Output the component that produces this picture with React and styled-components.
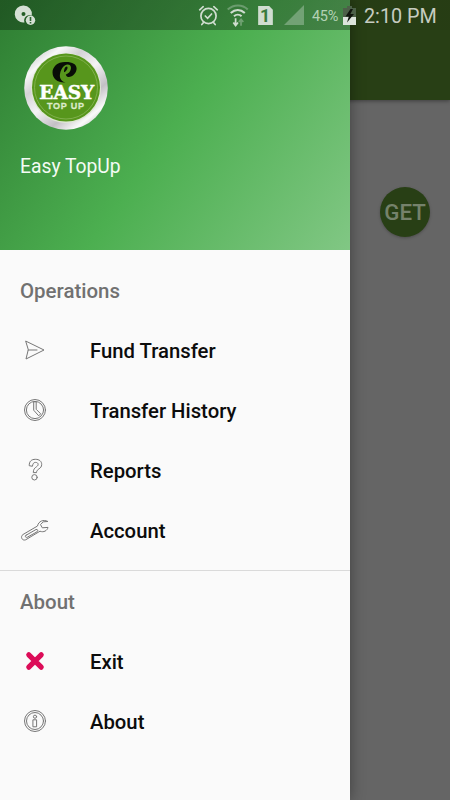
import React from "react";
import styled, { createGlobalStyle } from "styled-components";

const GlobalStyle = createGlobalStyle`
  * { box-sizing: border-box; }
  body { margin: 0; font-family: Roboto, "Liberation Sans", sans-serif; overflow: hidden; }
`;

const Screen = styled.div`
  position: relative;
  width: 450px;
  height: 800px;
  overflow: hidden;
  background: #656565;
`;

const Page = styled.main`
  display: flex;
  flex-direction: column;
  align-items: stretch;
  height: 100%;
`;

const AppBar = styled.div`
  height: 100px;
  background: #283f15;
  box-shadow: 0 1px 4px rgba(0, 0, 0, 0.4);
`;

const PageBody = styled.div`
  display: flex;
  justify-content: flex-end;
  padding: 87px 20px 0;
`;

const GetButton = styled.button`
  display: flex;
  align-items: center;
  justify-content: center;
  width: 50px;
  height: 50px;
  padding: 1px 0 0;
  border: 0;
  border-radius: 50%;
  background: #283f15;
  color: #75826b;
  font: 500 22.3px/1 Roboto, sans-serif;
  box-shadow: 0 1px 3px rgba(0, 0, 0, 0.25);
`;

const Drawer = styled.aside`
  position: absolute;
  top: 0;
  left: 0;
  width: 350px;
  height: 100%;
  background: #fafafa;
  box-shadow: 0 0 14px rgba(0, 0, 0, 0.38);
`;

const DrawerHeader = styled.header`
  height: 250px;
  padding: 45px 20px 0 23px;
  background: linear-gradient(125.54deg, #2e7d32, #4caf50 50%, #81c784);
`;

const AccountName = styled.div`
  margin: 24px 0 0 -3px;
  color: #f4fbf4;
  font-size: 19.3px;
  line-height: 24px;
`;

const Section = styled.section`
  padding-top: ${(p) => p.$top}px;
  & + & {
    margin-top: 9px;
    border-top: 1px solid #dadada;
  }
`;

const SectionTitle = styled.h2`
  display: flex;
  align-items: center;
  height: 60px;
  margin: 0;
  padding-left: 20px;
  color: #717171;
  font-size: 20.45px;
  font-weight: 500;
`;

const MenuItem = styled.div`
  display: grid;
  grid-template-columns: 30px 1fr;
  column-gap: 40px;
  align-items: center;
  height: 60px;
  padding: 0 20px;
  color: #0c0c0c;
  font-size: 20.3px;
  font-weight: 500;
`;

const Icon = styled.svg`
  display: block;
  margin-bottom: 2px;
  fill: none;
  stroke: #777;
  stroke-width: 1;
  stroke-linejoin: round;
  stroke-linecap: round;
`;

const StatusBar = styled.div`
  position: absolute;
  inset: 0 0 auto;
  display: flex;
  align-items: center;
  height: 30px;
  color: #cfd8cf;
  background: linear-gradient(90deg, rgba(0, 0, 0, 0.29) 350px, rgba(0, 0, 0, 0.04) 350px);
`;

const StatusIcon = styled.svg`
  display: block;
  flex: none;
  margin-left: ${(p) => p.$gap}px;
`;

const BatteryText = styled.span`
  width: 31px;
  margin: 2px 0 0 8px;
  font-size: 14.5px;
  letter-spacing: -0.3px;
  white-space: nowrap;
  color: #b3d2b5;
`;

const Clock = styled.span`
  margin: 2px 0 0 8px;
  font-size: 19.8px;
  white-space: nowrap;
  color: #c6ccc1;
`;

const LogoText = styled.text`
  font-family: "DejaVu Serif", serif;
  font-weight: 700;
  fill: #fff;
  text-anchor: middle;
`;

const LogoCaption = styled.text`
  font-family: "Liberation Sans", sans-serif;
  font-weight: 700;
  fill: #dcebc9;
  text-anchor: middle;
`;

const SimText = styled.text`
  font: 700 17px Roboto, sans-serif;
  fill: #397b3d;
  text-anchor: middle;
`;

function Logo() {
  return (
    <svg width="86" height="86" viewBox="0 0 86 86" display="block">
      <defs>
        <linearGradient id="rim" x1="0.1" y1="0" x2="0.9" y2="1">
          <stop offset="0" stopColor="#b9b9b9" />
          <stop offset="0.18" stopColor="#f8f8f8" />
          <stop offset="0.32" stopColor="#d4d2d5" />
          <stop offset="0.5" stopColor="#f4f3f5" />
          <stop offset="0.7" stopColor="#c3c0c5" />
          <stop offset="0.85" stopColor="#fafafa" />
          <stop offset="1" stopColor="#aaa" />
        </linearGradient>
      </defs>
      <circle cx="43" cy="43" r="41.8" fill="url(#rim)" />
      <circle cx="43" cy="43" r="35" fill="#dfe8d4" />
      <circle cx="43" cy="42.5" r="34" fill="#57961c" />
      <circle cx="43" cy="42.5" r="31.5" fill="none" stroke="#8ab659" strokeWidth="0.8" />
      <path d="M43 17C35 16.500 29.500 21.500 29.500 27.300c0 6.500 5 10.500 13 10.200-4.500-1.200-6.500-5-5.300-9.500 1.200-4.700 4-8.200 7.300-8.500 3.500-.2 4.500 3.500 2.500 6.700-1 1.700-2.600 2.800-4.200 3.200.7 2.600 2.900 3.300 5.200 2.200 3.200-1.500 5.600-4.700 5.600-8.200C53.600 19.300 49.500 17 43 17z" fill="#090d07" />
      <path d="M41 27.300c-.2-3 1.200-5.800 2.700-5.800 1.800.2.600 4.300-2.700 5.800z" fill="#090d07" />
      <LogoText x="43.800" y="54.300" fontSize="18" stroke="#fff" strokeWidth="0.5" textLength="55" lengthAdjust="spacingAndGlyphs">EASY</LogoText>
      <LogoCaption x="42.500" y="63.700" fontSize="9" stroke="#dcebc9" strokeWidth="0.3" textLength="37" lengthAdjust="spacing">TOP UP</LogoCaption>
    </svg>
  );
}

const glyphs = {
  send: <path d="M6 6.200 24 15 6 24l2.200-9zM8.200 15H17" />,
  history: (
    <>
      <circle cx="15" cy="15" r="10.500" />
      <circle cx="15" cy="15" r="8.600" />
      <path d="M13.700 7.200v8l5 5.600 2-2-4.500-4.500V7.200z" />
    </>
  ),
  help: (
    <>
      <path d="M9.200 10.300c0-4 2.200-6 6.200-6s6.300 2.100 6.300 5.100c0 4.800-5.200 4.200-5.200 8.200h-3.200c0-6 4.800-5.300 4.800-8.200 0-1.400-1.100-2-2.600-2-2 0-2.600 1.300-3 3.500z" />
      <circle cx="14.500" cy="22.300" r="2.700" />
    </>
  ),
  wrench: (
    <>
      <path d="M27.500 6.300c-4-2.100-9-.2-10 4.700L3 19.500c-3 2-1 6.700 2.700 5.300L20 16.200c3.700 1.500 7.200-.5 8-3.800l-5.700.4-1.800-3.200 2.500-2.500z" />
      <path d="m6 20.300 10-5.800c1.800-.7 2.500 1.400 1 2.300l-9.800 5.500c-1.700.6-2.600-1-1.200-2z" />
    </>
  ),
  close: (
    <path d="m8.800 8.800 12.400 12.400m0-12.400L8.800 21.200" stroke="#dc0c58" strokeWidth="5.200" />
  ),
  info: (
    <>
      <circle cx="15" cy="15" r="10.500" />
      <circle cx="15" cy="15" r="8.500" />
      <circle cx="15" cy="10.700" r="1.600" />
      <path d="M13.300 13.800h3.300v7h-3.300z" />
    </>
  ),
};

const operations = [
  ["send", "Fund Transfer"],
  ["history", "Transfer History"],
  ["help", "Reports"],
  ["wrench", "Account"],
];

const about = [
  ["close", "Exit"],
  ["info", "About"],
];

function Menu({ title, items, top }) {
  return (
    <Section $top={top}>
      <SectionTitle>{title}</SectionTitle>
      {items.map(([icon, label]) => (
        <MenuItem key={label}>
          <Icon width="30" height="30" viewBox="0 0 30 30">{glyphs[icon]}</Icon>
          <span>{label}</span>
        </MenuItem>
      ))}
    </Section>
  );
}

function Status() {
  return (
    <StatusBar>
      <StatusIcon $gap={14} width="22" height="22" viewBox="0 0 22 22">
        <path fillRule="evenodd" fill="#d5e0d5" d="M9.500 1.500a8.500 8.500 0 1 0 1 16.900 5.500 5.500 0 0 1 7.300-6.900A8.500 8.500 0 0 0 9.500 1.500zm0 6.500a2 2 0 1 1 0 4 2 2 0 0 1 0-4z" />
        <circle cx="16.500" cy="16.200" r="4.700" fill="#d5e0d5" />
        <path d="M16.500 13v4m0 1v1.400" stroke="#2d6530" strokeWidth="1.600" />
      </StatusIcon>
      <StatusIcon $gap={162} width="22" height="22" viewBox="0 0 22 22" fill="none" stroke="#d0ddd0" strokeWidth="1.700" strokeLinecap="round">
        <circle cx="10.500" cy="12" r="7.600" />
        <path d="m7.300 12 2.300 2.300 4-4.300M1.700 5.800 5.200 2.700M19.300 5.800 15.800 2.700M5.500 18.500l-1.700 2M15.500 18.500l1.700 2" />
      </StatusIcon>
      <StatusIcon $gap={6} width="24" height="26" viewBox="0 0 22 24" fill="none" stroke="#d0ddd0" strokeWidth="1.900">
        <path d="M1.500 7C7 2 15 2 20 7" stroke="#6b9c6e" />
        <path d="M4.300 10.200c4-3.600 9-3.600 13 0M7.300 13.200c2-1.900 5-1.900 7 0" />
        <path d="M8.800 15v6M6.700 19l2.100 2.800 2.200-2.800" strokeWidth="1.600" />
        <path d="M13.800 22v-5.500M11.700 18.500l2.100-2.500 2.100 2.500" stroke="#70a172" strokeWidth="1.600" />
      </StatusIcon>
      <StatusIcon $gap={7} width="17" height="21" viewBox="0 0 16 20">
        <path d="M1 1h10.500L15 4.500V19H1z" fill="#d0ddd0" />
        <SimText x="7.700" y="16">1</SimText>
      </StatusIcon>
      <StatusIcon $gap={10} width="20" height="20" viewBox="0 0 20 20">
        <path d="M20 0v20H0z" fill="#72a275" />
      </StatusIcon>
      <BatteryText>45%</BatteryText>
      <StatusIcon $gap={0} width="13" height="21" viewBox="0 0 13 21">
        <path d="M4 1h5v2h4v9H0V3h4z" fill="#4c6048" />
        <path d="M0 12h13v8H0z" fill="#dce4dc" />
        <path d="m7.500 4-5 7.500h3.300L4 17.500l7-8.500H7.400L10 4z" fill="#10150d" />
      </StatusIcon>
      <Clock>2:10 PM</Clock>
    </StatusBar>
  );
}

export default function App() {
  return (
    <>
      <GlobalStyle />
      <Screen>
        <Page>
          <AppBar />
          <PageBody>
            <GetButton>GET</GetButton>
          </PageBody>
        </Page>
        <Drawer>
          <DrawerHeader>
            <Logo />
            <AccountName>Easy TopUp</AccountName>
          </DrawerHeader>
          <Menu title="Operations" items={operations} top={11} />
          <Menu title="About" items={about} top={1} />
        </Drawer>
        <Status />
      </Screen>
    </>
  );
}
